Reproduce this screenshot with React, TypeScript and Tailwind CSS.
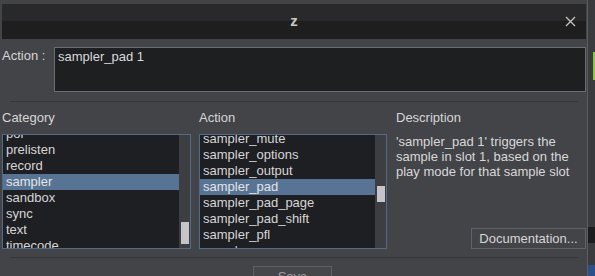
import React from "react";

const categories = ["pol", "prelisten", "record", "sampler", "sandbox", "sync", "text", "timecode"];
const actions = [
  "sampler_mute",
  "sampler_options",
  "sampler_output",
  "sampler_pad",
  "sampler_pad_page",
  "sampler_pad_shift",
  "sampler_pfl",
  "sampler_rec",
];

type ListProps = {
  items: string[];
  selected: string;
  offset: string;
  width: string;
  thumb: string;
};

function ListBox({ items, selected, offset, width, thumb }: ListProps) {
  return (
    <div className={`${width} h-[115px] border border-[#546a8a] bg-[#1e1f22] flex overflow-hidden`}>
      <div className="flex-1 overflow-hidden">
        <div className={offset}>
          {items.map((it) => (
            <div
              key={it}
              className={`h-[16px] leading-[16px] pl-[3px] whitespace-nowrap ${
                it === selected ? "bg-[#587495] text-[#e4e4e4]" : "text-[#d6d6d6]"
              }`}
            >
              {it}
            </div>
          ))}
        </div>
      </div>
      {/* scrollbar */}
      <div className="w-[11px] bg-[#3d3e42] relative">
        <div className={`absolute left-[2px] w-[8px] bg-[#c5c5c9] ${thumb}`} />
      </div>
    </div>
  );
}

export default function App() {
  return (
    <div
      className="w-[595px] h-[276px] overflow-hidden flex bg-[#434448] text-[13px] text-[#d6d6d6]"
      style={{ fontFamily: "'Liberation Sans', Arial, sans-serif" }}
    >
      <div className="w-[588px] pt-[4px] pl-[2px] border-r border-[#5c5d61]">
        {/* TITLE */}
        <div className="w-[584px] h-[35px] flex flex-col relative">
          <div className="h-[17px] bg-[#29292b]" />
          <div className="flex-1 bg-[#1e1e1f]" />
          <div className="absolute inset-0 flex items-center justify-center font-bold text-[15px] text-[#c9c9c9]">
            z
          </div>
          <svg className="absolute right-[10px] top-[12px]" width="11" height="11" viewBox="0 0 11 11">
            <path d="M1 1 L10 10 M10 1 L1 10" stroke="#c4c4c4" strokeWidth="1.3" />
          </svg>
        </div>

        {/* ACTION */}
        <div className="flex mt-[8px]">
          <div className="w-[52px] pt-[1px] leading-[15px]">Action :</div>
          <div className="w-[532px] h-[45px] border border-[#6c6d70] bg-[#1e1f21] px-[3px] pt-[1px] leading-[15px] text-[#dadada]">
            sampler_pad 1
          </div>
        </div>

        <div className="ml-[8px] mt-[9px] w-[568px] h-px bg-[#36373a]" />

        {/* COLUMNS */}
        <div className="flex mt-[8px]">
          <div className="w-[197px]">
            <div className="h-[16px] leading-[16px] mb-[8px]">Category</div>
            <ListBox
              items={categories}
              selected="sampler"
              offset="-mt-[9px]"
              width="w-[189px]"
              thumb="top-[87px] h-[22px]"
            />
          </div>
          <div className="w-[197px]">
            <div className="h-[16px] leading-[16px] mb-[8px]">Action</div>
            <ListBox
              items={actions}
              selected="sampler_pad"
              offset="-mt-[4px]"
              width="w-[188px]"
              thumb="top-[51px] h-[16px]"
            />
          </div>
          <div className="w-[190px] flex flex-col">
            <div className="h-[16px] leading-[16px] mb-[8px]">Description</div>
            <div className="leading-[15px] text-[#d8d8d8]">
              'sampler_pad 1' triggers the sample in slot 1, based on the play mode for that sample slot
            </div>
            <div className="mt-auto flex justify-end">
              <button className="w-[115px] h-[21px] border border-[#616266] bg-[#434448] text-[#d6d6d6] leading-[19px]">
                Documentation...
              </button>
            </div>
          </div>
        </div>

        <div className="ml-[8px] mt-[8px] w-[568px] h-px bg-[#36373a]" />

        {/* SAVE */}
        <div className="flex justify-center mt-[8px] pr-[4px]">
          <button className="w-[79px] h-[22px] border border-[#5f6064] bg-[#46474b] text-[#9c9c9c] leading-[20px]">
            Save
          </button>
        </div>
      </div>

      {/* background app strip */}
      <div className="flex-1 bg-[#3a3b3e] flex flex-col">
        <div className="h-[52px]" />
        <div className="h-[28px] flex justify-end">
          <div className="w-[2px] bg-[#8dc63f]" />
        </div>
        <div className="h-[147px]" />
        <div className="h-[16px] bg-[#1c1c1e]" />
        <div className="h-[22px]" />
        <div className="flex-1 bg-[#2a4f8a]" />
      </div>
    </div>
  );
}
